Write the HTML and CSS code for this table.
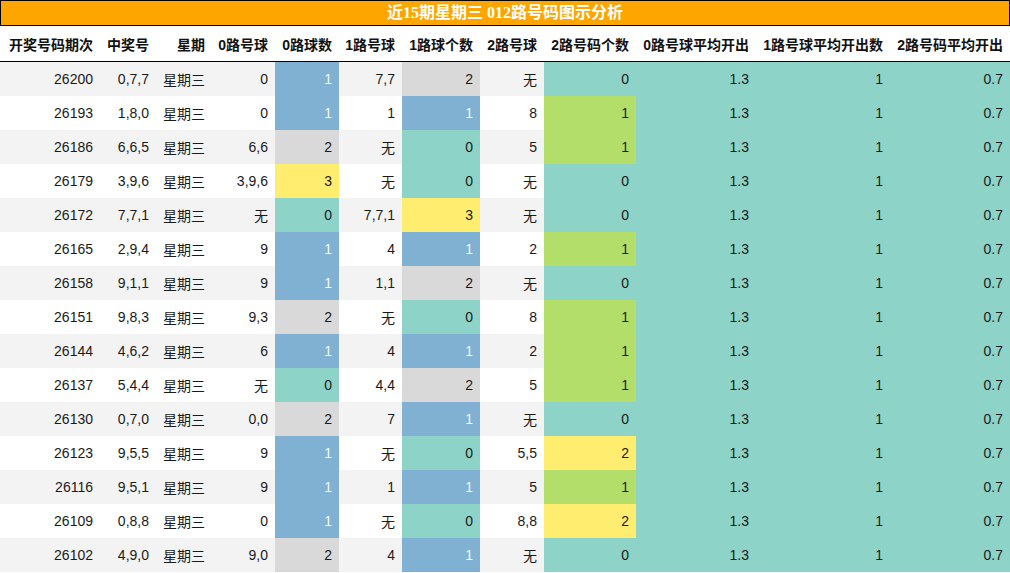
FILE: index.html
```html
<!DOCTYPE html>
<html lang="zh">
<head>
<meta charset="utf-8">
<title>近15期星期三 012路号码图示分析</title>
<link rel="stylesheet" href="styles.css">
</head>
<body>
<div class="title">近15期星期三 012路号码图示分析</div>
<table class="grid">
<colgroup>
<col class="w1"><col class="w2"><col class="w3"><col class="w4"><col class="w5"><col class="w6"><col class="w7"><col class="w8"><col class="w9"><col class="w10"><col class="w11"><col class="w12">
</colgroup>
<thead>
<tr><th>开奖号码期次</th><th>中奖号</th><th>星期</th><th>0路号球</th><th>0路球数</th><th>1路号球</th><th>1路球个数</th><th>2路号球</th><th>2路号码个数</th><th>0路号球平均开出</th><th>1路号球平均开出数</th><th>2路号码平均开出</th></tr>
</thead>
<tbody>
<tr><td>26200</td><td>0,7,7</td><td class="cn">星期三</td><td>0</td><td class="c1">1</td><td>7,7</td><td class="c2">2</td><td class="cn">无</td><td class="c0">0</td><td class="c0">1.3</td><td class="c0">1</td><td class="c0">0.7</td></tr>
<tr><td>26193</td><td>1,8,0</td><td class="cn">星期三</td><td>0</td><td class="c1">1</td><td>1</td><td class="c1">1</td><td>8</td><td class="g1">1</td><td class="c0">1.3</td><td class="c0">1</td><td class="c0">0.7</td></tr>
<tr><td>26186</td><td>6,6,5</td><td class="cn">星期三</td><td>6,6</td><td class="c2">2</td><td class="cn">无</td><td class="c0">0</td><td>5</td><td class="g1">1</td><td class="c0">1.3</td><td class="c0">1</td><td class="c0">0.7</td></tr>
<tr><td>26179</td><td>3,9,6</td><td class="cn">星期三</td><td>3,9,6</td><td class="c3">3</td><td class="cn">无</td><td class="c0">0</td><td class="cn">无</td><td class="c0">0</td><td class="c0">1.3</td><td class="c0">1</td><td class="c0">0.7</td></tr>
<tr><td>26172</td><td>7,7,1</td><td class="cn">星期三</td><td class="cn">无</td><td class="c0">0</td><td>7,7,1</td><td class="c3">3</td><td class="cn">无</td><td class="c0">0</td><td class="c0">1.3</td><td class="c0">1</td><td class="c0">0.7</td></tr>
<tr><td>26165</td><td>2,9,4</td><td class="cn">星期三</td><td>9</td><td class="c1">1</td><td>4</td><td class="c1">1</td><td>2</td><td class="g1">1</td><td class="c0">1.3</td><td class="c0">1</td><td class="c0">0.7</td></tr>
<tr><td>26158</td><td>9,1,1</td><td class="cn">星期三</td><td>9</td><td class="c1">1</td><td>1,1</td><td class="c2">2</td><td class="cn">无</td><td class="c0">0</td><td class="c0">1.3</td><td class="c0">1</td><td class="c0">0.7</td></tr>
<tr><td>26151</td><td>9,8,3</td><td class="cn">星期三</td><td>9,3</td><td class="c2">2</td><td class="cn">无</td><td class="c0">0</td><td>8</td><td class="g1">1</td><td class="c0">1.3</td><td class="c0">1</td><td class="c0">0.7</td></tr>
<tr><td>26144</td><td>4,6,2</td><td class="cn">星期三</td><td>6</td><td class="c1">1</td><td>4</td><td class="c1">1</td><td>2</td><td class="g1">1</td><td class="c0">1.3</td><td class="c0">1</td><td class="c0">0.7</td></tr>
<tr><td>26137</td><td>5,4,4</td><td class="cn">星期三</td><td class="cn">无</td><td class="c0">0</td><td>4,4</td><td class="c2">2</td><td>5</td><td class="g1">1</td><td class="c0">1.3</td><td class="c0">1</td><td class="c0">0.7</td></tr>
<tr><td>26130</td><td>0,7,0</td><td class="cn">星期三</td><td>0,0</td><td class="c2">2</td><td>7</td><td class="c1">1</td><td class="cn">无</td><td class="c0">0</td><td class="c0">1.3</td><td class="c0">1</td><td class="c0">0.7</td></tr>
<tr><td>26123</td><td>9,5,5</td><td class="cn">星期三</td><td>9</td><td class="c1">1</td><td class="cn">无</td><td class="c0">0</td><td>5,5</td><td class="c3">2</td><td class="c0">1.3</td><td class="c0">1</td><td class="c0">0.7</td></tr>
<tr><td>26116</td><td>9,5,1</td><td class="cn">星期三</td><td>9</td><td class="c1">1</td><td>1</td><td class="c1">1</td><td>5</td><td class="g1">1</td><td class="c0">1.3</td><td class="c0">1</td><td class="c0">0.7</td></tr>
<tr><td>26109</td><td>0,8,8</td><td class="cn">星期三</td><td>0</td><td class="c1">1</td><td class="cn">无</td><td class="c0">0</td><td>8,8</td><td class="c3">2</td><td class="c0">1.3</td><td class="c0">1</td><td class="c0">0.7</td></tr>
<tr><td>26102</td><td>4,9,0</td><td class="cn">星期三</td><td>9,0</td><td class="c2">2</td><td>4</td><td class="c1">1</td><td class="cn">无</td><td class="c0">0</td><td class="c0">1.3</td><td class="c0">1</td><td class="c0">0.7</td></tr>
</tbody>
</table>
</body>
</html>
```

FILE: styles.css
```css
html, body {
  margin: 0;
  padding: 0;
  background: #ffffff;
}
body {
  font-family: "Liberation Sans", "Noto Sans CJK SC", sans-serif;
  color: #1a1a1a;
  width: 1010px;
}
.title {
  height: 24px;
  line-height: 24px;
  border: 1px solid #000;
  background: #ffa500;
  color: #ffffff;
  text-align: center;
  font-family: "Liberation Serif", "Noto Sans CJK SC", serif;
  font-weight: bold;
  font-size: 16px;
}
.grid {
  width: 1010px;
  table-layout: fixed;
  border-collapse: collapse;
  border-spacing: 0;
  font-size: 14px;
}
.w1 { width: 100px; }
.w2 { width: 56px; }
.w3 { width: 56px; }
.w4 { width: 63px; }
.w5 { width: 64px; }
.w6 { width: 63px; }
.w7 { width: 78px; }
.w8 { width: 64px; }
.w9 { width: 92px; }
.w10 { width: 120px; }
.w11 { width: 134px; }
.w12 { width: 120px; }
.grid th {
  height: 35px;
  padding: 0 7px 0 0;
  text-align: right;
  font-weight: bold;
  color: #111;
  white-space: nowrap;
  border-bottom: 1px solid #000;
  vertical-align: middle;
}
.grid td {
  height: 34px;
  line-height: 16px;
  padding: 0 7px 0 0;
  text-align: right;
  vertical-align: middle;
  white-space: nowrap;
}
.grid td.cn {
  height: 32px;
  padding-top: 2px;
}
.grid tbody tr:nth-child(odd) {
  background: #f3f3f3;
}
.grid tbody tr:nth-child(even) {
  background: #ffffff;
}
.grid td.c0 { background: #8dd3c7; }
.grid td.c1 { background: #80b1d3; color: #f4f7fa; }
.grid td.c2 { background: #d9d9d9; }
.grid td.c3 { background: #ffed6f; }
.grid td.g1 { background: #b3de69; }
```
